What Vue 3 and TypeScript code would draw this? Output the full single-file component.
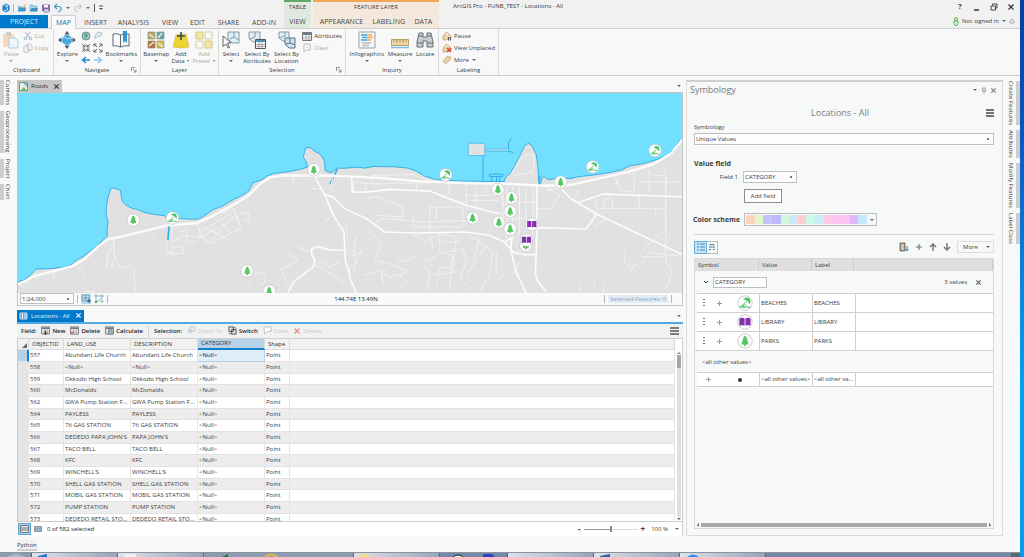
<script setup lang="ts">
import { ref } from 'vue'

interface Row { id: number; land: string; desc: string }
interface Marker { x: number; y: number; kind: 'tree' | 'beach' | 'book' }

const tabs = ['PROJECT', 'MAP', 'INSERT', 'ANALYSIS', 'VIEW', 'EDIT', 'SHARE', 'ADD-IN']
const leftDock = ['Contents', 'Geoprocessing', 'Project', 'Chart']
const rightDock = ['Create Features', 'Attributes', 'Modify Features', 'Label Class']

const rows: Row[] = [
  { id: 557, land: 'Abundant Life Church', desc: 'Abundant Life Church' },
  { id: 558, land: '<Null>', desc: '<Null>' },
  { id: 559, land: 'Okkodo High School', desc: 'Okkodo High School' },
  { id: 560, land: 'McDonalds', desc: 'McDonalds' },
  { id: 562, land: 'GWA Pump Station F...', desc: 'GWA Pump Station F...' },
  { id: 564, land: 'PAYLESS', desc: 'PAYLESS' },
  { id: 565, land: '76 GAS STATION', desc: '76 GAS STATION' },
  { id: 566, land: "DEDEDO PAPA JOHN'S", desc: "PAPA JOHN'S" },
  { id: 567, land: 'TACO BELL', desc: 'TACO BELL' },
  { id: 568, land: 'KFC', desc: 'KFC' },
  { id: 569, land: "WINCHELL'S", desc: "WINCHELL'S" },
  { id: 570, land: 'SHELL GAS STATION', desc: 'SHELL GAS STATION' },
  { id: 571, land: 'MOBIL GAS STATION', desc: 'MOBIL GAS STATION' },
  { id: 572, land: 'PUMP STATION', desc: 'PUMP STATION' },
  { id: 573, land: 'DEDEDO RETAIL STO...', desc: 'DEDEDO RETAIL STO...' }
]

const markers: Marker[] = [
  { x: 398, y: 434, kind: 'tree' }, { x: 516, y: 428, kind: 'beach' },
  { x: 741, y: 587, kind: 'tree' }, { x: 807, y: 648, kind: 'tree' },
  { x: 941, y: 283, kind: 'tree' }, { x: 1338, y: 298, kind: 'beach' },
  { x: 1419, y: 428, kind: 'tree' }, { x: 1495, y: 342, kind: 'tree' },
  { x: 1536, y: 367, kind: 'tree' }, { x: 1532, y: 408, kind: 'tree' },
  { x: 1498, y: 441, kind: 'tree' }, { x: 1532, y: 461, kind: 'tree' },
  { x: 1579, y: 510, kind: 'tree' }, { x: 1581, y: 494, kind: 'book' },
  { x: 1597, y: 447, kind: 'book' }, { x: 1684, y: 320, kind: 'tree' },
  { x: 1780, y: 274, kind: 'beach' }, { x: 1968, y: 225, kind: 'beach' }
]

const classes = [
  { kind: 'beach', name: 'BEACHES' },
  { kind: 'book', name: 'LIBRARY' },
  { kind: 'tree', name: 'PARKS' }
]

const ramp = ['#fcd3bd', '#dcf9c8', '#c3c4fb', '#bdb9fb', '#d2f8dc', '#cde9fb', '#fccfcc', '#ccfaea', '#c9ecfa', '#fbcbe6', '#fac5f3', '#fac5ee', '#ddb7fa', '#c5e8fc']

const coast =
  'M51 620L70 614 88 600 105 582 150 580 190 576 210 570 220 559 250 542 285 515 320 482 319 462 322 440 317 420 316 400 321 370 328 345 333 337 345 340 360 345 361 360 365 378 378 391 395 399 410 402 430 411 460 417 490 421 510 427 540 430 590 432 606 425 640 402 665 393 700 372 720 363 745 347 758 322 785 313 800 302 820 294 870 288 905 280 922 275 918 258 909 245 913 232 916 217 930 216 945 228 958 234 967 245 974 260 975 285 985 290 997 290 1012 278 1035 278 1075 275 1095 278 1120 273 1185 274 1225 278 1250 287 1272 301 1300 310 1325 314 1385 316 1450 318 1515 318 1517 308 1535 290 1550 262 1565 232 1575 212 1586 203 1597 210 1610 235 1615 270 1619 328 1623 328 1627 308 1635 304 1647 313 1675 308 1715 309 1735 304 1795 297 1835 290 1865 284 1895 270 1925 266 1965 255 2005 240 2030 215 2040 195 2050 190'
const land = coast + 'V700H51Z'

const field = ref('CATEGORY')
const group = ref('CATEGORY')
const zoom = ref(50)
</script>

<template>
  <div class="desktop">
    <svg class="defs" aria-hidden="true">
      <symbol id="tree" viewBox="-20 -20 40 40">
        <path d="M0 -14L5 -8 4 -7 7 -2 5 -1 9 4 7 5 10 9H2V13H-2V9H-10L-7 5 -9 4 -5 -1 -7 -2 -4 -7 -5 -8Z" fill="#58c763" />
      </symbol>
      <symbol id="beach" viewBox="-20 -20 40 40">
        <path d="M-5 -10Q5 -17 11 -11 16 -5 12 3L6 -5Z" fill="#4fc36a" />
        <path d="M6 -6L-9 8H-3M-9 8L2 4" fill="none" stroke="#4fc36a" stroke-width="2.500" />
        <path d="M-14 10Q-11 8 -7 10T0 10T7 10T13 10" fill="none" stroke="#4fc36a" stroke-width="3" />
      </symbol>
      <symbol id="book" viewBox="-20 -20 40 40">
        <path d="M-14 -9Q-7 -12 -1 -9V9Q-7 7 -14 9ZM14 -9Q7 -12 1 -9V9Q7 7 14 9Z" fill="#8430ad" />
      </symbol>
      <symbol id="caret" viewBox="0 0 6 4"><path d="M1 1H5L3 3Z" fill="#666" /></symbol>
      <symbol id="x" viewBox="0 0 8 8"><path d="M1.500 1.500L6.500 6.500M6.500 1.500L1.500 6.500" stroke="currentColor" stroke-width="1.200" /></symbol>
      <symbol id="launch" viewBox="0 0 6 6"><path d="M.5 4V.5H4M2 2L5 5M5 2.500V5H2.500" fill="none" stroke="#777" stroke-width=".8" /></symbol>
      <symbol id="tag" viewBox="0 0 10 10"><path d="M1 5L4.500 1 9 5V8H6L5 9H1Z" fill="#ecd3a4" stroke="#b99d73" stroke-width=".7" /><circle cx="5" cy="3.500" r=".8" fill="#fff" /></symbol>
      <symbol id="grid" viewBox="0 0 10 9"><path d="M.5 .5H9.500V8.500H.5Z" fill="#fff" stroke="#777" /><path d="M1 1H9V3H1Z" fill="#6e7b86" /><path d="M1 5H9M1 7H9M4 3V8M7 3V8" stroke="#8c8c8c" stroke-width=".6" /></symbol>
    </svg>

    <div class="app">
      <header class="head">
        <div class="head-left">
          <div class="quick">
            <button aria-label="ArcGIS Pro"><svg width="8" height="10" viewBox="0 0 8 10"><path d="M4 .5L7.500 2.500V7.500L4 9.500 .5 7.500V2.500Z" fill="#1682d3" /><path d="M2 3L4 2 6 3.200 4 4.500 6 6 4 8 2 7" fill="none" stroke="#fff" stroke-width=".8" /></svg></button>
            <i class="bar"></i>
            <button aria-label="New project"><svg width="10" height="10" viewBox="0 0 10 10"><path d="M1 3H4L5 4H9V8H1Z" fill="#7db8d7" /><path d="M2 5H9L8 8.500H1Z" fill="#4296c5" /><path d="M6 3L9 1 8 4Z" fill="#ecaf44" /></svg></button>
            <button aria-label="Open project"><svg width="10" height="10" viewBox="0 0 10 10"><path d="M1 2H4L5 3H8V8H1Z" fill="#a6d2e8" stroke="#5fa5c9" stroke-width=".6" /><path d="M2.500 5H9L8 8.500H1Z" fill="#3e92c3" /></svg></button>
            <button aria-label="Save project"><svg width="10" height="10" viewBox="0 0 10 10"><path d="M1 1.500H9V8H1Z" fill="#8a6cae" /><path d="M3 2H7V4.500H3Z" fill="#fff" /><path d="M3 6H8V9H3Z" fill="#e8e4f0" stroke="#4f4f7c" stroke-width=".6" /></svg></button>
            <button aria-label="Undo"><svg width="10" height="10" viewBox="0 0 10 10"><path d="M4 1L1.500 3.500 4 6M2 3.500H6Q8.500 4 8 6.500 7.500 8 5 9" fill="none" stroke="#4a97c8" stroke-width="1.200" /></svg></button>
            <svg width="6" height="4"><use href="#caret" /></svg>
            <button aria-label="Redo"><svg width="10" height="10" viewBox="0 0 10 10"><path d="M6 1L8.500 3.500 6 6M8 3.500H4Q1.500 4 2 6.500 2.500 8 5 9" fill="none" stroke="#b5d3e4" stroke-width="1.200" /></svg></button>
            <svg width="6" height="4"><use href="#caret" /></svg>
            <i class="bar dark"></i>
            <button aria-label="Customize"><svg width="6" height="6" viewBox="0 0 6 6"><path d="M1 1H5" stroke="#555" /><path d="M1 3H5L3 5Z" fill="#555" /></svg></button>
          </div>
          <nav class="tabs">
            <button v-for="t in tabs" :key="t" class="tab" :class="{ project: t === 'PROJECT', active: t === 'MAP' }">{{ t }}</button>
          </nav>
        </div>
        <div class="ctx ctx-table">
          <span>TABLE</span>
          <nav><button class="tab">VIEW</button></nav>
        </div>
        <div class="ctx ctx-layer">
          <span>FEATURE LAYER</span>
          <nav><button class="tab">APPEARANCE</button><button class="tab">LABELING</button><button class="tab">DATA</button></nav>
        </div>
        <div class="head-title">ArcGIS Pro - FUNB_TEST - Locations - All</div>
        <div class="head-right">
          <div class="win">
            <button aria-label="Help">?</button>
            <button aria-label="Minimize"><svg width="8" height="8"><path d="M1 7H6" stroke="#333" stroke-width="1.500" /></svg></button>
            <button aria-label="Restore"><svg width="8" height="8"><path d="M2.500 2.500V1H7V5H5.500M1 3H5.500V7H1Z" fill="none" stroke="#444" /></svg></button>
            <button aria-label="Close"><svg width="8" height="8"><use href="#x" /></svg></button>
          </div>
          <div class="sign">
            <svg width="8" height="9" viewBox="0 0 8 9"><circle cx="4" cy="2" r="1.500" fill="none" stroke="#5bb25b" /><path d="M2 4H6V6.500L5 8.500H3L2 6.500Z" fill="#dff0dc" stroke="#5bb25b" /></svg>
            <button>Not signed in</button>
            <svg width="6" height="4"><use href="#caret" /></svg>
            <svg width="6" height="6" viewBox="0 0 6 6"><path d="M1 3L3 1 5 3V5H1Z" fill="none" stroke="#888" stroke-width=".7" /></svg>
          </div>
        </div>
      </header>

      <section class="ribbon">
        <div class="group g-clip">
          <div class="tools">
            <button class="big off"><svg width="18" height="18" viewBox="0 0 18 18"><path d="M1 3H12V16H1Z" fill="#f6d9bc" /><path d="M4 1H9V5H4Z" fill="#ccc" /><path d="M7 7H13L16 10V17H7Z" fill="#eef6fb" stroke="#a9cbe0" /></svg><span>Paste</span><svg width="6" height="4"><use href="#caret" /></svg></button>
            <div class="stack wide">
              <button class="small off"><svg width="10" height="10" viewBox="0 0 10 10"><path d="M2 1L7 7M7 1L3 7" stroke="#aac" /><circle cx="2.500" cy="7.500" r="1.300" fill="none" stroke="#9bc" /><circle cx="7.500" cy="7.500" r="1.300" fill="none" stroke="#9bc" /></svg>Cut</button>
              <button class="small off"><svg width="10" height="10" viewBox="0 0 10 10"><path d="M1 3H6V9H1ZM4 1H7L9 3V7H4Z" fill="#fff" stroke="#aab4bd" stroke-width=".8" /></svg>Copy</button>
            </div>
          </div>
          <footer>Clipboard</footer>
        </div>
        <div class="group g-nav">
          <div class="tools">
            <button class="big"><svg width="18" height="18" viewBox="0 0 18 18"><path d="M9 0L11.500 3.500H6.500ZM9 18L11.500 14.500H6.500ZM0 9L3.500 6.500V11.500ZM18 9L14.500 6.500V11.500Z" fill="#4a5560" /><circle cx="9" cy="9" r="5" fill="#48a9df" /><path d="M5 7Q8 5 9 8 11 6 13 8" stroke="#b9e2f5" fill="none" /></svg><span>Explore</span><svg width="6" height="4"><use href="#caret" /></svg></button>
            <div class="navgrid">
              <svg width="10" height="10" viewBox="0 0 10 10"><circle cx="5" cy="5" r="4" fill="#9fcbe0" stroke="#6b8c9c" /><path d="M3 3L6 2 7 5 4 8Z" fill="#5cad6b" /></svg>
              <svg width="10" height="10" viewBox="0 0 10 10"><path d="M2 5L5 1 9 2 8 5 5 5 2 8Z" fill="#e4ecf2" stroke="#b3c2cc" /></svg>
              <svg width="10" height="10" viewBox="0 0 10 10"><path d="M1 1L4 4M4 1.500V4H1.500M9 1L6 4M6 1.500V4H8.500M1 9L4 6M1.500 6H4V8.500M9 9L6 6M6 8.500V6H8.500" stroke="#666" fill="none" /></svg>
              <svg width="10" height="10" viewBox="0 0 10 10"><path d="M1 1L4 4M1 3.500V1H3.500M9 1L6 4M6.500 1H9V3.500M1 9L4 6M1 6.500V9H3.500M9 9L6 6M6.500 9H9V6.500" stroke="#666" fill="none" /></svg>
              <svg width="10" height="10" viewBox="0 0 10 10"><path d="M9 5H2M5 2L1.500 5 5 8" stroke="#1b8ad0" stroke-width="1.500" fill="none" /></svg>
              <svg width="10" height="10" viewBox="0 0 10 10"><path d="M1 5H8M5 2L8.500 5 5 8" stroke="#8dc6e9" stroke-width="1.500" fill="none" /></svg>
            </div>
            <button class="big"><svg width="18" height="18" viewBox="0 0 18 18"><path d="M1 3Q5 2 8.500 4V16Q5 14 1 15ZM16 3Q12 2 8.500 4V16Q12 14 17 15V3Z" fill="#fafafa" stroke="#5d6a75" /><path d="M11 0H15V12L13 10 11 12Z" fill="#2f97d4" /></svg><span>Bookmarks</span><svg width="6" height="4"><use href="#caret" /></svg></button>
          </div>
          <footer>Navigate<svg class="launch" width="6" height="6"><use href="#launch" /></svg></footer>
        </div>
        <div class="group g-layer">
          <div class="tools">
            <button class="big"><svg width="18" height="18" viewBox="0 0 18 18"><path d="M1 1H8V8H1Z" fill="#b6a86a" /><path d="M10 1H17V8H10Z" fill="#5fa5b8" /><path d="M1 10H8V17H1Z" fill="#b87341" /><path d="M10 10H17V17H10Z" fill="#d3c04d" /><path d="M2 3L7 7M11 7L15 2M2 15L7 11M11 12L16 16" stroke="#e8efd5" stroke-width="1.500" /><path d="M1 1H8V8H1ZM10 1H17V8H10ZM1 10H8V17H1ZM10 10H17V17H10Z" fill="none" stroke="#8a8a76" stroke-width=".6" /></svg><span>Basemap</span><svg width="6" height="4"><use href="#caret" /></svg></button>
            <button class="big"><svg width="18" height="18" viewBox="0 0 18 18"><path d="M4 4L14 3 17 16 9 17 1 16Z" fill="#ecd434" stroke="#cdb42a" stroke-width=".6" /><path d="M9 1V9M5 5H13" stroke="#3f4750" stroke-width="1.600" /></svg><span>Add<br>Data <svg width="4" height="4"><use href="#caret" /></svg></span></button>
            <button class="big off"><svg width="18" height="18" viewBox="0 0 18 18"><path d="M1 1H8V8H1ZM10 10H17V17H10Z" fill="#f4e6a0" stroke="#d5c98c" /><path d="M10 1H17V8H10ZM1 10H8V17H1Z" fill="#f8f8f8" stroke="#d5d0ac" /></svg><span>Add<br>Preset <svg width="4" height="4"><use href="#caret" /></svg></span></button>
          </div>
          <footer>Layer</footer>
        </div>
        <div class="group g-sel">
          <div class="tools">
            <button class="big"><svg width="18" height="18" viewBox="0 0 18 18"><path d="M6 1H17V12H10L6 8Z" fill="#dceef8" stroke="#8a979f" /><path d="M12 1V6L17 9M12 6L8 8" stroke="#8a979f" fill="none" /><path d="M1 5L9 12H5.500L7.500 16.500 6 17 4 13 1 15.500Z" fill="#fff" stroke="#444" stroke-width=".8" /></svg><span>Select</span><svg width="6" height="4"><use href="#caret" /></svg></button>
            <button class="big"><svg width="18" height="18" viewBox="0 0 18 18"><path d="M1 1H12V11H5L1 7Z" fill="#dceef8" stroke="#8a979f" /><path d="M7 1V6L1 8" stroke="#8a979f" fill="none" /><path d="M7.500 8.500H17.500V17.500H7.500Z" fill="#fff" stroke="#555" /><path d="M8 9H17V11H8Z" fill="#4e8fba" /><path d="M8 13.500H17M8 15.500H17M11 11V17M14 11V17" stroke="#888" stroke-width=".7" /></svg><span>Select By<br>Attributes</span></button>
            <button class="big"><svg width="18" height="18" viewBox="0 0 18 18"><path d="M1 1H11V10H5L1 7Z" fill="#dceef8" stroke="#8a979f" /><path d="M7 1V5L1 7" stroke="#8a979f" fill="none" /><path d="M7 7H17V17H11L7 13Z" fill="#c9e4f3" stroke="#5f7079" /><path d="M12 7V12L17 14M12 12L8 13" stroke="#5f7079" fill="none" /></svg><span>Select By<br>Location</span></button>
            <div class="stack">
              <button class="small"><svg width="10" height="9"><use href="#grid" /></svg>Attributes</button>
              <button class="small off"><svg width="10" height="10" viewBox="0 0 10 10"><path d="M2 1H8V7H4L2 9Z" fill="#fff" stroke="#bbb" /><path d="M4 3L6 5" stroke="#bbb" /></svg>Clear</button>
            </div>
          </div>
          <footer>Selection<svg class="launch" width="6" height="6"><use href="#launch" /></svg></footer>
        </div>
        <div class="group g-inq">
          <div class="tools">
            <button class="big"><svg width="18" height="18" viewBox="0 0 18 18"><path d="M1 1H17V17H1Z" fill="#f4f6f7" stroke="#9aa1a6" /><path d="M3 4H9M4 6.500H9M3 9H9" stroke="#4aa3d8" stroke-width="1.500" /><path d="M9 4H14M9 6.500H15M9 9H13" stroke="#f0a44c" stroke-width="1.500" /><path d="M4 12H13M4 14.500H11" stroke="#bbb" stroke-width="1.500" /></svg><span>Infographics</span><svg width="6" height="4"><use href="#caret" /></svg></button>
            <button class="big"><svg width="18" height="18" viewBox="0 0 18 18"><path d="M.5 8.500H17.500V14.500H.5Z" fill="#eed7a5" stroke="#b9a06d" /><path d="M3 9V11M6 9V12M9 9V11M12 9V12M15 9V11" stroke="#8c7648" stroke-width=".8" /><path d="M0 16.500H18" stroke="#7fc0e6" stroke-width="1.500" /></svg><span>Measure</span><svg width="6" height="4"><use href="#caret" /></svg></button>
            <button class="big"><svg width="18" height="18" viewBox="0 0 18 18"><path d="M3 2H7V6H11V2H15L17 11V16H11V10H7V16H1V11Z" fill="#c9ccce" stroke="#6a6e71" /><path d="M1 12H7M11 12H17M3 5H7M11 5H15" stroke="#6a6e71" /></svg><span>Locate</span></button>
          </div>
          <footer>Inquiry</footer>
        </div>
        <div class="group g-lab">
          <div class="tools">
            <div class="stack">
              <button class="small"><svg width="10" height="10" viewBox="0 0 10 10"><use href="#tag" /><path d="M6.500 6V9.500M8.500 6V9.500" stroke="#555" /></svg>Pause</button>
              <button class="small"><svg width="10" height="10" viewBox="0 0 10 10"><use href="#tag" /><path d="M5 5L9 9M9 5L5 9" stroke="#d0402c" stroke-width="1.300" /></svg>View Unplaced</button>
              <button class="small"><svg width="10" height="10" viewBox="0 0 10 10"><path d="M1 6L5 1.500 9 2 8 5 3.500 9Z" fill="#ecd3a4" stroke="#b99d73" stroke-width=".7" /></svg>More <svg width="6" height="4"><use href="#caret" /></svg></button>
            </div>
          </div>
          <footer>Labeling</footer>
        </div>
      </section>

      <main class="work">
        <aside class="dock left"><button v-for="d in leftDock" :key="d">{{ d }}</button></aside>

        <div class="center">
          <section class="mapview">
            <div class="viewtabs">
              <div class="viewtab"><svg width="9" height="9" viewBox="0 0 9 9"><path d="M.5 .5H8.500V8.500H.5Z" fill="#e6f3e2" stroke="#63a07c" /><path d="M4 1H8V5Z" fill="#6fb7d9" /><path d="M2 8L5 5 7 8Z" fill="#71b96d" /></svg>Roads<button aria-label="Close Roads"><svg width="7" height="7"><use href="#x" /></svg></button></div>
              <svg class="menu" width="6" height="4"><use href="#caret" /></svg>
            </div>
            <div class="canvas">
              <svg viewBox="51 51 1998 602" preserveAspectRatio="xMidYMid slice" role="img" aria-label="Map">
                <rect x="0" y="0" width="2100" height="700" fill="#73dfff" />
                <path :d="land" fill="#e1e1e1" />
                <path :d="coast" fill="none" stroke="#35b0e6" stroke-width="3" />
                <g fill="none" stroke="#35b0e6" stroke-width="3">
                  <path d="M1406 208Q1407 203 1412 203H1450Q1456 204 1456 210V240H1406Z" fill="#e1e1e1" stroke-width="2" />
                  <path d="M1450 240V318M1456 221H1527M1456 226H1520L1542 231M1527 221V200L1537 185M1470 296H1510V303H1470ZM1477 303V318M1491 303V318M1500 303V318M1620 300V328" />
                  <path d="M506 448L502 494M1012 280L1003 300 990 326" stroke-width="5" />
                </g>
                <path d="M1458 223H1525" stroke="#e1e1e1" stroke-width="3" />
                <g class="lanes">
                  <path d="M333 493L342 510 323 530 317 580M340 490V540L358 580 385 572 400 585 403 650M345 545L330 580M228 572L245 590 257 605M60 630L72 640M75 616L84 627M102 603L110 615M155 590L162 612M450 466L460 480M516 452L512 500 550 480 600 487 590 446M528 452L545 470 560 460 558 500H590M500 500L498 535 515 525 520 552M512 515L545 514 550 535 500 535M590 448L606 490 630 506 722 458 700 400 665 414M600 470L690 415M604 485L720 420M630 500L700 420M645 425L690 470M720 415L745 412 748 440 730 432M610 455L680 490" />
                  <path d="M932 340H960M880 302V324M842 582L895 558 860 530M842 582L860 630M890 515L930 530 942 540M955 565L965 558 990 575 1020 560M945 570L1000 600 1035 625M975 436L990 430M1000 300L990 340 1005 350M760 600Q780 580 792 600T780 630M740 630L755 612M250 648L280 650M1060 320V350M1060 320L1120 325 1290 322M1115 300V320M1160 297V315M1115 300L1240 297 1290 318M1095 322L1100 345M1250 322V345M1350 325L1345 360M1100 370L1130 362 1210 395V425L1130 420M1130 440L1150 430 1280 440 1400 435M1240 420V455H1390V395H1290V470M1310 395V435" />
                  <path d="M1400 330V400M1430 330V410M1460 330V360H1510V430H1480M1400 360H1460M1410 375H1500M1520 335V500M1540 335V500M1560 335V480M1580 335V460M1600 335V480M1520 380H1610M1520 430H1570M1535 295Q1570 235 1590 235T1600 290L1540 300M1510 330V430M1590 430H1605M1640 335L1680 360 1655 400H1610M1640 345L1700 335M1740 345L1720 375M1790 370V395M1795 400H1920V355M1815 395V375Q1830 360 1840 375V400M1845 300L1870 350M1860 305L1850 330M1905 290V350L1860 345M1950 285V350M1960 300H2000V560M1920 320H2040M1920 400H2000M1970 400V430M2000 280V470M1770 430L1790 450 1815 435M1795 400V420" />
                  <path d="M1040 520L1070 555 1050 580M1070 480L1060 540 1090 530M1035 440L1045 490M1090 515L1075 540 1060 590M1110 470L1145 500 1125 555 1165 565 1230 590 1170 605 1145 590 1150 630M1090 600L1145 585M1190 545L1215 560 1250 540M1200 600L1220 620 1200 640M1240 480L1280 500 1320 475 1370 485M1320 480V530L1360 540 1350 580 1320 575 1310 630M1280 560L1310 540M1340 530L1390 520 1400 560 1380 610 1410 640M1370 485L1350 640M1410 480L1480 530 1470 600 1440 650M1440 490L1420 560M1460 510L1400 600M1490 530L1490 600M1520 590L1490 620M1540 600L1560 560M1300 600L1370 590M1260 560L1290 590 1280 650M1330 500H1380M1300 520L1290 480M1875 530V560L1890 575 1935 560 1950 530 2000 540 2040 540M1900 575L1895 590M1930 525L1990 470M1930 545H1990M1740 650L1745 630M1785 640V625M1810 650L1820 625M2000 560L2020 590 2000 640" />
                </g>
                <g class="roads">
                  <path d="M942 300L975 360 1000 420 1032 470 1036 560 1048 590 1050 610 1070 655M970 357L1000 365 1035 400M862 655L880 620 940 575 945 555 935 540 935 520 955 514 990 525H1033" />
                  <path d="M1035 400L1100 430 1155 470 1250 473 1400 470 1470 480 1515 500 1540 530 1570 538 1607 538M1540 485L1515 500M1057 350H1100L1170 342 1290 347 1400 390 1500 415M1055 305L1057 350M1535 490L1535 530 1550 590 1580 655M1612 332V480L1608 600 1620 625 1640 650M1612 457L1760 461 1775 440 1790 418M1686 330L1690 345 1715 370 1790 415 2050 538M1735 382L1785 365 1810 356 2050 364" />
                  <path class="main" d="M51 628L100 603 160 587 220 571 250 553 290 515 320 493 400 475 500 450 590 443 630 425 700 388 745 360 780 325 810 306 850 300 950 300 1035 302 1135 307 1265 318 1385 323 1515 325 1635 331 1715 328 1775 315 1885 290 1965 265 2015 235 2050 192" />
                </g>
                <g v-for="(m, i) in markers" :key="i">
                  <circle :cx="m.x" :cy="m.y" r="19" fill="#fff" stroke="#bfbfbf" stroke-width="2" />
                  <use :href="'#' + m.kind" :x="m.x - 20" :y="m.y - 20" width="40" height="40" />
                </g>
              </svg>
            </div>
            <div class="status">
              <select aria-label="Map scale" class="scale"><option>1:24,000</option></select>
              <i class="bar"></i>
              <button aria-label="Snap grid" class="on"><svg width="10" height="10" viewBox="0 0 10 10"><path d="M1 1H8V7H1ZM1 4H8M4.500 1V7" fill="none" stroke="#6c93ac" stroke-width=".8" /><path d="M8 5V9M6 7H10" stroke="#333" stroke-width=".8" /></svg></button>
              <button aria-label="Dynamic constraints"><svg width="10" height="9" viewBox="0 0 10 9"><path d="M1 1H3V3H1ZM4 2H7M7 1H9V3H7ZM2 4V7H5L6 5H9M7 7H9V8H7Z" fill="none" stroke="#7ba3bb" stroke-width=".8" /><path d="M1 7H3V9H1Z" fill="#4b9c58" /></svg></button>
              <i class="bar"></i>
              <span class="coords">144.74E 13.49N</span>
              <i class="bar"></i>
              <span class="selcount">Selected Features: 0</span>
              <i class="bar"></i>
            </div>
          </section>

          <section class="tableview">
            <div class="viewtabs">
              <div class="viewtab blue"><svg width="9" height="8" viewBox="0 0 9 8"><path d="M1 1H8V7H1ZM1 3H8M1 5H8M3.500 1V7M6 1V7" fill="none" stroke="#fff" stroke-width=".8" /></svg>Locations - All<button aria-label="Close Locations"><svg width="7" height="7"><use href="#x" /></svg></button></div>
              <svg class="menu" width="6" height="4"><use href="#caret" /></svg>
            </div>
            <div class="tbar">
              <b>Field:</b>
              <button><svg width="9" height="9" viewBox="0 0 10 10"><use href="#grid" /><path d="M5 5V10M3 8H7" stroke="#333" /></svg>New</button>
              <button><svg width="9" height="9" viewBox="0 0 10 10"><use href="#grid" /><path d="M1 6L4 9M4 6L1 9" stroke="#d8452f" /></svg>Delete</button>
              <button><svg width="9" height="9" viewBox="0 0 10 10"><use href="#grid" /><path d="M4 4H8V10H4Z" fill="#9db8c9" stroke="#666" stroke-width=".6" /></svg>Calculate</button>
              <i class="bar"></i>
              <b>Selection:</b>
              <button class="faint"><svg width="9" height="9" viewBox="0 0 10 10"><path d="M3 1H9V6H3Z" fill="#e3eef5" stroke="#b8cbd6" /><circle cx="3.500" cy="5.500" r="2" fill="none" stroke="#b8cbd6" /></svg>Zoom To</button>
              <button><svg width="9" height="9" viewBox="0 0 10 10"><path d="M1 1H6V6H1ZM4 4H9V9H4Z" fill="#dfe9ef" stroke="#444" /><path d="M7 1L9 3M1 8L3 9" stroke="#444" /></svg>Switch</button>
              <button class="faint"><svg width="9" height="9" viewBox="0 0 10 10"><path d="M1 1H9V6H5L2 9Z" fill="#fff" stroke="#bbb" /></svg>Clear</button>
              <button class="faint"><svg width="8" height="8" class="red"><use href="#x" /></svg>Delete</button>
              <svg class="burger" width="9" height="8"><path d="M0 1H9M0 4H9M0 7H9" stroke="#555" stroke-width="1.500" /></svg>
            </div>
            <div class="gridwrap">
              <table class="attrs">
                <thead>
                  <tr><th class="c0"><svg width="5" height="5"><path d="M5 0V5H0Z" fill="#666" /></svg></th><th class="c1">OBJECTID</th><th class="c2">LAND_USE</th><th class="c2">DESCRIPTION</th><th class="c2 hot">CATEGORY</th><th class="c3">Shape</th><th></th></tr>
                </thead>
                <tbody>
                  <tr v-for="(r, i) in rows" :key="r.id" :class="{ cur: i === 0 }"><td></td><td>{{ r.id }}</td><td>{{ r.land }}</td><td>{{ r.desc }}</td><td class="cat">&lt;Null&gt;</td><td>Point</td><td></td></tr>
                </tbody>
              </table>
              <div class="vscroll"><svg width="6" height="4" viewBox="0 0 6 4"><path d="M1 3H5L3 1Z" fill="#888" /></svg><div class="track"><i></i></div><svg width="6" height="4"><use href="#caret" /></svg></div>
            </div>
            <div class="tfoot">
              <button aria-label="Show all records" class="on"><svg width="9" height="8" viewBox="0 0 9 8"><path d="M.5 .5H8.500V7.500H.5Z" fill="#dde9f0" stroke="#777" /><path d="M1 3H8M1 5H8" stroke="#777" /></svg></button>
              <button aria-label="Show selected records"><svg width="8" height="6" viewBox="0 0 8 6"><path d="M.5 .5H7.500V5.500H.5Z" fill="#9fc4d8" stroke="#777" stroke-width=".8" /><path d="M1 3H7" stroke="#777" stroke-width=".7" /></svg></button>
              <span class="count">0 of 582 selected</span>
              <button aria-label="Zoom out" class="sign-btn">-</button>
              <input v-model="zoom" type="range" aria-label="Zoom level">
              <button aria-label="Zoom in" class="sign-btn">+</button>
              <span class="pct">100 %</span>
              <svg width="6" height="4"><use href="#caret" /></svg>
            </div>
          </section>
        </div>

        <aside class="symb">
          <div class="symb-head">
            <h2>Symbology</h2>
            <svg width="6" height="4"><use href="#caret" /></svg>
            <svg width="6" height="7" viewBox="0 0 7 8"><path d="M2 1H5V4.500M2 1V4.500M1 4.500H6M3.500 4.500V8" fill="none" stroke="#888" stroke-width=".9" /></svg>
            <button aria-label="Close pane"><svg width="7" height="7"><use href="#x" /></svg></button>
          </div>
          <div class="symb-title"><h3>Locations - All</h3><svg width="8" height="8"><path d="M0 1H8M0 4H8M0 7H8" stroke="#444" stroke-width="1.500" /></svg></div>
          <label for="method">Symbology</label>
          <select id="method"><option>Unique Values</option></select>
          <h4>Value field</h4>
          <div class="fieldrow"><label for="field">Field 1</label><select id="field" v-model="field"><option>CATEGORY</option></select></div>
          <button class="addfield">Add field</button>
          <div class="scheme"><h4>Color scheme</h4><button aria-label="Color scheme" aria-haspopup="listbox" class="ramp"><i v-for="(c, i) in ramp" :key="i" :style="{ background: c }"></i><svg width="6" height="4"><use href="#caret" /></svg></button></div>
          <div class="ctools">
            <div class="toggle">
              <button aria-label="Classes" class="on"><svg width="8" height="8" viewBox="0 0 8 8"><path d="M0 1H2M0 4H2M0 7H2M3 1H8M3 4H8M3 7H8" stroke="#4188b7" stroke-width="1.200" /></svg></button>
              <button aria-label="Scales"><svg width="8" height="8" viewBox="0 0 8 8"><path d="M2 2.500V1.500H6V2.500M1 4H7M1 6.500H3M5 6.500H7" fill="none" stroke="#4f7894" /></svg></button>
            </div>
            <button aria-label="Add all values"><svg width="10" height="10" viewBox="0 0 10 10"><path d="M1 1H6V9H1Z" fill="#b8997e" stroke="#555" stroke-width=".8" /><path d="M2 3H5M2 5H5M2 7H5" stroke="#fff" stroke-width=".8" /><path d="M8 4V8M6.500 7L8 9 9.500 7" fill="none" stroke="#2f8ac4" /></svg></button>
            <button aria-label="Add values"><svg width="8" height="8"><path d="M4 1V7M1 4H7" stroke="#647a8c" stroke-width="1.200" /></svg></button>
            <button aria-label="Move up"><svg width="8" height="8"><path d="M4 8V2M1 4L4 1 7 4" fill="none" stroke="#777" stroke-width="1.500" /></svg></button>
            <button aria-label="Move down"><svg width="8" height="8"><path d="M4 0V6M1 4L4 7 7 4" fill="none" stroke="#777" stroke-width="1.500" /></svg></button>
            <button class="more">More<svg width="6" height="4"><use href="#caret" /></svg></button>
          </div>
          <div class="classes">
            <table>
              <thead><tr><th>Symbol</th><th>Value</th><th>Label</th><th></th></tr></thead>
              <tbody>
                <tr class="cat-row"><td colspan="4"><svg width="6" height="6"><path d="M1 2L3 4 5 2" fill="none" stroke="#444" /></svg><input v-model="group" aria-label="Group heading"><span>3 values</span><button aria-label="Remove group"><svg width="7" height="7"><use href="#x" /></svg></button></td></tr>
                <tr v-for="c in classes" :key="c.name" class="cls"><td class="sym"><svg width="4" height="10"><path d="M1 1H3V2H1ZM1 4H3V5H1ZM1 7H3V8H1Z" fill="#777" /></svg><svg width="7" height="7"><path d="M3.500 1V6M1 3.500H6" stroke="#999" /></svg><svg width="16" height="16" viewBox="-20 -20 40 40"><circle r="18" fill="#fff" stroke="#bbb" stroke-width="2" /><use :href="'#' + c.kind" x="-20" y="-20" width="40" height="40" /></svg></td><td>{{ c.name }}</td><td>{{ c.name }}</td><td></td></tr>
                <tr class="other"><td colspan="4">&lt;all other values&gt;</td></tr>
                <tr class="cls last"><td class="sym"><svg width="7" height="7"><path d="M3.500 1V6M1 3.500H6" stroke="#999" /></svg><svg width="4" height="4"><circle cx="2" cy="2" r="2" fill="#333" /></svg></td><td>&lt;all other values&gt;</td><td>&lt;all other va...</td><td></td></tr>
              </tbody>
            </table>
            <div class="hscroll"><svg width="4" height="6"><path d="M3 1V5L1 3Z" fill="#666" /></svg><i></i><svg width="4" height="6"><path d="M1 1V5L3 3Z" fill="#666" /></svg></div>
          </div>
        </aside>

        <aside class="dock right"><button v-for="d in rightDock" :key="d">{{ d }}</button></aside>
      </main>

      <div class="python"><button>Python</button></div>
      <div class="taskbar">
        <i class="t31"><svg width="20" height="5"><path d="M0 5Q10 -3 20 5Z" fill="#9fc0d0" /></svg></i>
        <i class="t86 lit"><svg width="10" height="5"><path d="M0 5V3L9 1V5Z" fill="#1a75cf" /></svg></i>
        <i class="t86 lit"><svg width="14" height="5"><path d="M0 1H12V5H0Z" fill="#eef0f2" /></svg></i>
        <i class="t150"><svg width="70" height="5"><path d="M10 5L18 1V5Z" fill="#18743c" /><path d="M54 5Q61 -2 68 5" fill="none" stroke="#e2bb37" stroke-width="2" /></svg></i>
        <i class="t86 lit"><svg width="12" height="5"><path d="M0 1H6L8 3H12V5H0Z" fill="#f0dc82" /></svg></i>
        <i class="t68"><svg width="60" height="5"><path d="M6 5Q12 -1 18 5" fill="#fff" stroke="#222" /><path d="M37 1H46L50 5H37Z" fill="#3841bd" /></svg></i>
        <i class="t86 lit"></i>
        <i class="t86 lit"><svg width="10" height="5"><path d="M0 3L10 1V5H0Z" fill="#2a5fae" /></svg></i>
        <i class="t86 lit"><svg width="14" height="5"><path d="M0 5Q7 -2 14 5Z" fill="#2a92ef" /></svg></i>
        <i class="rest"></i>
        <i class="show"></i>
      </div>
    </div>
  </div>
</template>

<style>
html, body { margin: 0; }
</style>

<style scoped>
* { box-sizing: border-box; }
.desktop {
  display: flex; height: 100vh; padding-right: 4px; overflow: hidden;
  background: linear-gradient(#033ea8, #0558c8 25%, #0484e4 50%, #00a2f6 70%, #019df2);
  font-family: "Open Sans", "Noto Sans", sans-serif; font-size: 6px; line-height: 8px; color: #3c3c3c;
}
.defs { position: absolute; width: 0; height: 0; }
svg { display: block; flex: none; }
i { display: block; font-style: normal; flex: none; }
button { font: inherit; color: inherit; border: 0; background: none; padding: 0; margin: 0; white-space: nowrap; display: flex; align-items: center; }
select, input { font: inherit; color: inherit; border: 1px solid #bfbfbf; background: #fdfdfd; border-radius: 0; margin: 0; padding: 0 3px; outline: 0; }
select {
  appearance: none; padding: 0 8px 0 1px;
  background: #fdfdfd linear-gradient(#777, #777) no-repeat right 4px center / 2px 2px;
}
h2, h3, h4 { margin: 0; font-weight: 400; }
.bar { width: 1px; height: 8px; background: #b5b5b5; }
.bar.dark { background: #555; }
.app { display: flex; flex-direction: column; flex: 1; min-width: 0; background: #f7f9f8; }

.head { display: flex; height: 29px; background: #f1f1f1; border-bottom: 1px solid #cfcfcf; }
.head-left { width: 284px; flex: none; }
.quick { display: flex; align-items: center; gap: 2px; height: 15px; padding: 0 2px; }
.quick .bar { margin: 0 1px; }
.tabs { display: grid; grid-template-columns: 48px 31px 33px 43px 30px 25px 37px 34px; height: 14px; }
.tab { justify-content: center; font-size: 7px; height: 14px; padding-top: 1px; color: #484848; }
.tabs .project { background: #0079cb; color: #d9ecf8; height: 13px; }
.tabs .active { background: #f9f9f9; color: #1173b5; border: 1px solid #cfcfcf; border-bottom: 0; margin: 0 3px; }
.ctx { display: flex; flex-direction: column; text-align: center; height: 28px; flex: none; }
.ctx span { height: 12px; line-height: 11px; font-size: 6px; }
.ctx nav { display: flex; justify-content: space-around; padding: 0 2px; }
.ctx-table { width: 27px; border-top: 2px solid #62a869; background: #dfe9df; }
.ctx-layer { width: 126px; margin-left: 2px; border-top: 2px solid #f2a65a; background: #f4e8dc; }
.head-title { margin-left: 14px; line-height: 13px; flex: 1; white-space: nowrap; }
.head-right { display: flex; flex-direction: column; align-items: flex-end; padding-right: 5px; }
.win { display: flex; gap: 9px; height: 14px; align-items: center; color: #333; font-weight: 700; }
.win button { width: 8px; justify-content: center; font-size: 7px; }
.sign { display: flex; align-items: center; gap: 2px; height: 14px; }

.ribbon { display: flex; height: 47px; background: #f8f8f8; border-bottom: 1px solid #cfcfcf; }
.group { display: flex; flex-direction: column; border-right: 1px solid #dadada; flex: none; }
.g-clip { width: 54px; } .g-nav { width: 87px; } .g-layer { width: 78px; } .g-sel { width: 127px; } .g-inq { width: 93px; } .g-lab { width: 60px; }
.tools { display: flex; flex: 1; justify-content: space-evenly; padding-top: 2px; }
.group footer { position: relative; height: 9px; line-height: 8px; text-align: center; }
.launch { position: absolute; right: 3px; top: 1px; }
.big { flex-direction: column; justify-content: flex-start; line-height: 7px; text-align: center; gap: 1px; }
.big > span { padding-top: 1px; }
.big span svg { display: inline-block; }
.off { color: #a9a9a9; }
.off > svg:nth-child(3) { opacity: .6; }
.stack { display: flex; flex-direction: column; gap: 2px; }
.stack.wide { margin-right: 2px; }
.small { gap: 2px; height: 10px; }
.navgrid { display: grid; grid-template-columns: 10px 10px; gap: 2px; align-content: start; }

.work { display: flex; flex: 1; min-height: 0; padding-top: 4px; }
.dock { width: 17px; flex: none; display: flex; flex-direction: column; gap: 6px; align-items: flex-start; }
.dock button { writing-mode: vertical-rl; width: 12px; border-left: 4px solid #cdcdcd; }
.dock.right { align-items: flex-end; padding-top: 1px; gap: 5px; }
.dock.right button { border-left: 0; border-right: 4px solid #cdcdcd; width: 14px; }
.center { flex: 1; min-width: 0; display: flex; flex-direction: column; gap: 4px; }
.mapview { flex: 226; min-height: 0; display: flex; flex-direction: column; }
.tableview { flex: 227; min-height: 0; display: flex; flex-direction: column; }
.viewtabs { display: flex; justify-content: space-between; height: 12px; align-items: flex-end; }
.viewtab { display: flex; align-items: center; gap: 3px; height: 12px; padding: 0 2px; background: #c6c6c6; }
.viewtab button { padding-left: 2px; color: #333; }
.viewtab.blue { background: #0079cb; color: #e9f4fb; }
.viewtab.blue button { color: #fff; }
.menu { margin: 0 1px 4px 0; }
.canvas { flex: 1; min-height: 0; border: 1px solid #c4c4c4; border-bottom: 0; overflow: hidden; }
.canvas svg { width: 100%; height: 100%; }
.lanes { fill: none; stroke: #f1f1f1; stroke-width: 3; }
.roads { fill: none; stroke: #fcfcfc; stroke-width: 5; stroke-linejoin: round; }
.roads .main { stroke-width: 7; }
.status { display: flex; align-items: center; gap: 3px; height: 13px; padding: 0 10px 0 2px; border: 1px solid #c4c4c4; border-top: 0; background: #f9faf9; }
.status .on { background: #b5dcf5; }
.status .scale { width: 54px; height: 11px; }
.coords { flex: 1; text-align: center; color: #222; }
.selcount { background: #e3edf7; color: #8ba0b5; padding: 0 2px; }

.tbar { display: flex; align-items: center; gap: 5px; height: 17px; padding: 0 4px; border-top: 2px solid #52a8e0; border-bottom: 1px solid #cfcfcf; background: #f1f1f1; color: #222; flex: none; white-space: nowrap; }
.tbar b { font-weight: 600; }
.tbar button { gap: 2px; font-weight: 600; }
.tbar .faint { color: #c9c9c9; font-weight: 400; }
.tbar .red { color: #dd8f85; }
.tbar .bar { height: 12px; background: #d3d3d3; }
.burger { margin-left: auto; }
.gridwrap { display: flex; flex: 1; min-height: 0; overflow: hidden; border-right: 1px solid #ccc; border-left: 1px solid #ccc; background: #fff; }
.attrs { flex: 1; table-layout: fixed; width: 100%; border-collapse: separate; border-spacing: 0; height: 0; }
.attrs th { height: 11px; padding: 0 3px; font-weight: 400; text-align: left; background: #f1f1f1; border-right: 1px solid #dcdcdc; border-bottom: 1px solid #dcdcdc; color: #333; }
.attrs td { height: 12px; padding: 0 1px; line-height: 8px; border-right: 1px solid #e6e6e6; border-bottom: 1px solid #e3e3e3; white-space: nowrap; overflow: hidden; }
.attrs tr:nth-child(3n) td { height: 11px; }
.attrs tr:nth-child(even) td { background: #ededed; }
.attrs tbody tr td:first-child { background: #e3e5e6; }
.attrs .c0 { width: 11px; padding: 3px 1px 0 4px; }
.attrs .c1 { width: 35px; } .attrs .c2 { width: 67px; } .attrs .c3 { width: 25px; }
.attrs th.hot { background: #b7d2e8; border-bottom: 2px solid #1181cc; }
.attrs tbody .cur td:first-child { background: #b7d2e8; border-right: 2px solid #1181cc; }
.attrs .cur .cat { background: #e0eefa; border-color: #b3d0ea; color: #111; }
.vscroll { width: 7px; display: flex; flex-direction: column; align-items: center; padding-top: 12px; }
.track { flex: 1; width: 4px; background: #e0e0e0; }
.track i { height: 13px; background: #a6a6a6; }
.tfoot { display: flex; align-items: center; gap: 3px; height: 15px; flex: none; background: #fff; border-top: 1px solid #ccc; border-right: 1px solid #ccc; padding: 0 2px 0 1px; white-space: nowrap; }
.tfoot .on { background: #a9d3f0; border: 1px solid #5ba4d4; padding: 1px; }
.tfoot .count { flex: 1; color: #222; padding-left: 2px; }
.tfoot .pct { padding: 0 3px; }
.sign-btn { font-weight: 700; font-size: 8px; }
input[type=range] { appearance: none; width: 54px; height: 8px; border: 0; padding: 0; background: linear-gradient(90deg, #999 50%, #ddd 50%) no-repeat center / 100% 1px; }
input[type=range]::-webkit-slider-thumb { appearance: none; width: 2px; height: 6px; background: #888; }

.symb { width: 317px; flex: none; margin: 0 0 0 3px; border: 1px solid #dcdcdc; border-top: 2px solid #cfcfcf; padding: 0 8px 6px 7px; display: flex; flex-direction: column; align-items: stretch; }
.symb-head { display: flex; align-items: center; gap: 3px; height: 16px; margin: 0 -3px 0 -4px; color: #777; }
.symb-head h2 { flex: 1; font-size: 9px; line-height: 14px; }
.symb-title { display: flex; align-items: center; height: 14px; margin-top: 8px; }
.symb-title h3 { flex: 1; text-align: center; font-size: 9px; color: #808080; line-height: 14px; }
.symb > label { margin: 3px 0 1px; line-height: 9px; }
#method { height: 12px; width: 100%; }
.symb h4 { font-weight: 700; font-size: 7px; line-height: 10px; }
.symb > h4 { margin-top: 14px; }
.fieldrow { display: flex; align-items: center; margin-top: 2px; height: 12px; }
.fieldrow label { width: 49px; text-align: right; padding-right: 5px; }
#field { width: 54px; height: 12px; }
.addfield { margin: 6px 0 0 50px; width: 38px; height: 14px; border: 1px solid #8c8c8c; background: #fff; justify-content: center; }
.scheme { display: flex; align-items: center; margin-top: 10px; height: 13px; }
.scheme h4 { width: 51px; margin-left: -1px; white-space: nowrap; }
.ramp { width: 133px; height: 13px; border: 1px solid #bcbcbc; padding: 0 1px; }
.ramp i { flex: 1; height: 9px; }
.ramp svg { margin-left: 2px; }
.ctools { display: flex; align-items: center; gap: 6px; margin-top: 8px; padding-top: 6px; height: 19px; border-top: 1px solid #d6d6d6; }
.toggle { display: flex; margin-right: auto; border: 1px solid #bbb; }
.toggle button { padding: 1px; width: 11px; height: 11px; justify-content: center; }
.toggle .on { background: #c8e3f5; outline: 1px solid #69acd6; }
.more { width: 37px; height: 12px; border: 1px solid #dedede; justify-content: space-between; padding: 0 2px 0 5px; }
.classes { flex: 1; margin-top: 5px; display: flex; flex-direction: column; justify-content: space-between; border: 1px solid #d8d8d8; min-height: 0; }
.classes table, .classes thead, .classes tbody { display: block; }
.classes tr { display: grid; grid-template-columns: 64px 53px 42px 1fr; }
.classes th { font-weight: 400; text-align: left; height: 12px; line-height: 12px; padding: 0 3px; background: #dfdfdf; border-right: 1px solid #cdcdcd; }
.classes td { padding: 0; }
.classes .cat-row, .classes .other { display: block; }
.cat-row td { display: flex; align-items: center; height: 22px; padding: 0 11px 0 8px; color: #555; }
.cat-row input { width: 54px; height: 11px; margin-left: 4px; padding: 0 1px; color: #3c3c3c; }
.cat-row span { margin-left: auto; padding-right: 8px; color: #3c3c3c; }
.classes .cls { grid-template-columns: 63px 53px 43px 1fr; margin-left: 2px; border-top: 1px solid #cfcfcf; background: #fff; }
.cls td { height: 18px; line-height: 18px; border-right: 1px solid #cfcfcf; padding-left: 1px; white-space: nowrap; }
.cls td:last-child { border-right: 0; }
.cls .sym { display: flex; align-items: center; gap: 10px; padding-left: 5px; }
.cls .sym svg:nth-child(3) { margin-left: 4px; }
.other td { display: block; height: 22px; line-height: 22px; padding-left: 7px; border-top: 1px solid #cfcfcf; }
.last { border-bottom: 1px solid #cfcfcf; }
.classes .last td { height: 13px; line-height: 13px; }
.last .sym { gap: 26px; padding-left: 8px; }
.hscroll { display: flex; align-items: center; gap: 1px; padding: 0 1px; height: 7px; }
.hscroll i { flex: 1; height: 4px; background: #a6a8a7; }

.python { height: 16px; flex: none; padding: 4px 0 0 17px; }
.python button { border-bottom: 2px solid #cfcfcf; height: 11px; background: #f1f1f1; }
.taskbar { display: flex; height: 5px; flex: none; background: #7488a3; border-top: 1px solid #8d939b; overflow: hidden; }
.taskbar i { border-right: 1px solid #5c6877; padding-left: 6px; }
.t31 { width: 32px; background: #8d9bb0; } .t86 { width: 86px; } .t150 { width: 150px; background: #8b9cb4; } .t68 { width: 68px; background: #7389a9; }
.lit { background: linear-gradient(90deg, #dde3ea, #97a5ba); }
.taskbar .rest { flex: 1; }
.show { width: 8px; background: #5c6672; }
</style>
